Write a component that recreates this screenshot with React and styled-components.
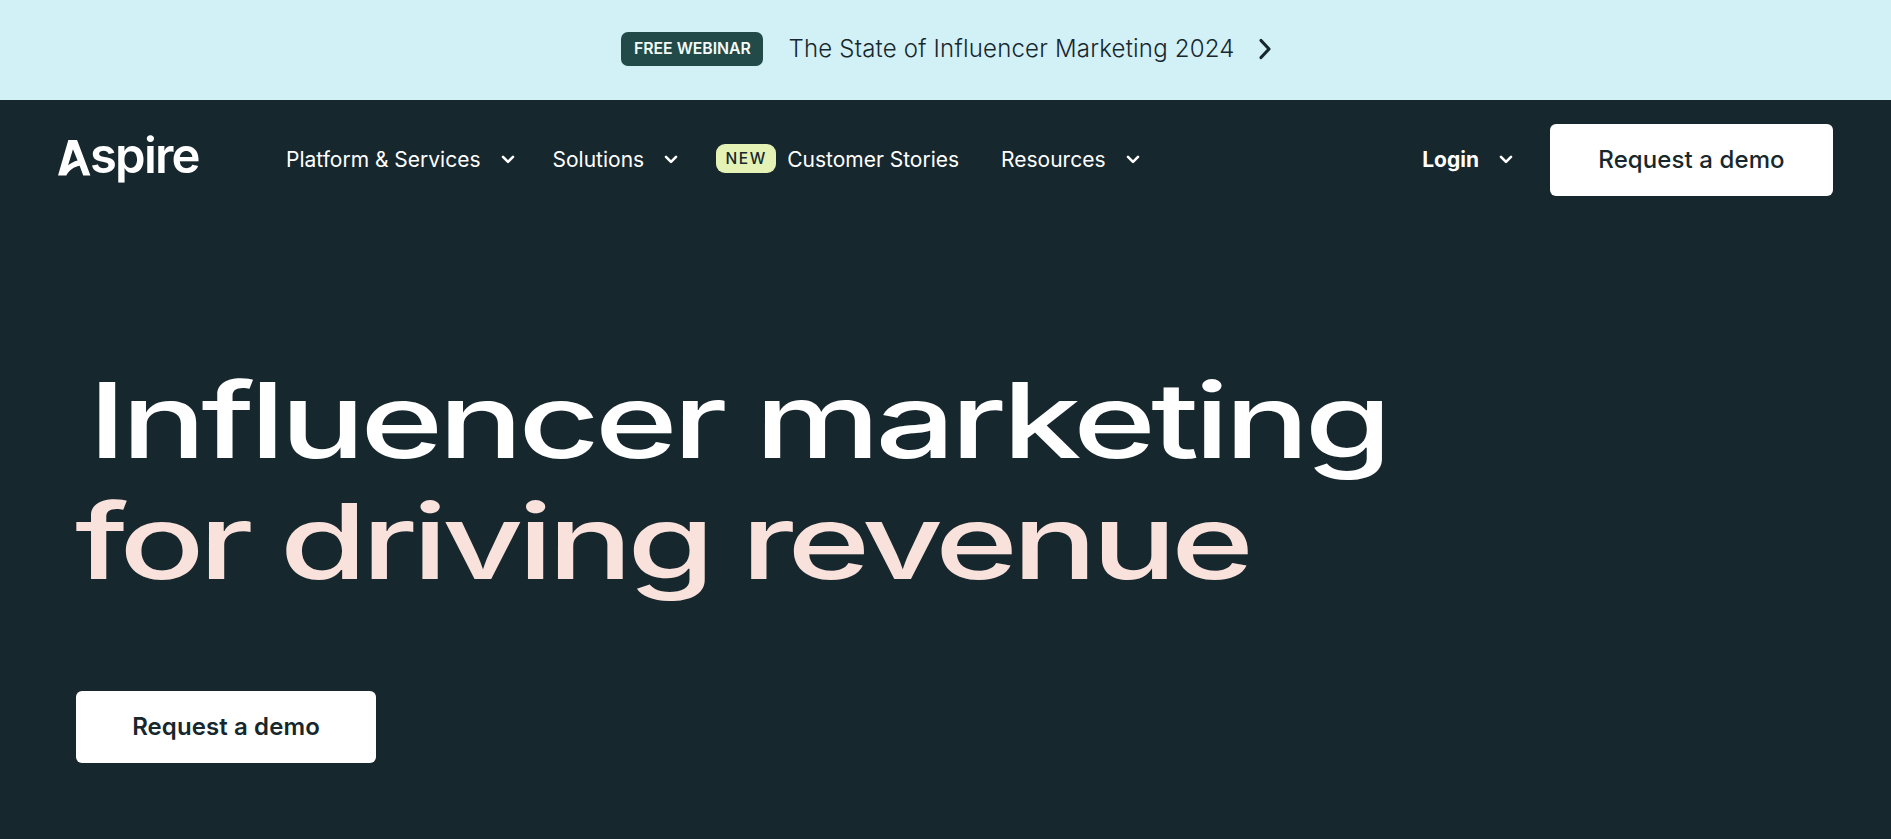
import React from 'react';
import styled, { createGlobalStyle } from 'styled-components';

const GlobalStyle = createGlobalStyle`
  html, body {
    margin: 0;
    padding: 0;
    background-color: #17272e;
  }
  body {
    font-family: Inter, "Liberation Sans", sans-serif;
    overflow: hidden;
  }
`;

const Page = styled.div`
  width: 100%;
  height: 839px;
  background-color: #17272e;
  overflow: hidden;
`;

const Banner = styled.a`
  height: 100px;
  padding-bottom: 3px;
  padding-left: 2px;
  box-sizing: border-box;
  display: flex;
  align-items: center;
  justify-content: center;
  background-color: #d2f1f6;
  color: #17272e;
`;

const BannerBadge = styled.span`
  height: 34px;
  width: 142px;
  display: flex;
  align-items: center;
  justify-content: center;
  border-radius: 7px;
  background-color: #214a48;
  color: #f4fbf9;
  font-size: 15.8px;
  font-weight: 600;
  white-space: nowrap;
`;

const BannerText = styled.span`
  margin-left: 25px;
  font-size: 24px;
  font-weight: 300;
  letter-spacing: 0.2px;
  white-space: nowrap;
`;

const BannerArrow = styled.svg`
  margin-left: 23px;
  width: 14px;
  height: 22px;
`;

const Navbar = styled.nav`
  height: 124px;
  padding: 24px 58px 0 58px;
  box-sizing: border-box;
  display: flex;
  align-items: flex-start;
`;

const Logo = styled.div`
  width: 228px;
  height: 72px;
  display: flex;
  align-items: center;
  color: #fff;
`;

const LogoMark = styled.svg`
  width: 33px;
  height: 36px;
  margin-top: -4px;
  flex-shrink: 0;
`;

const LogoText = styled.span`
  margin-left: -1px;
  font-size: 49px;
  font-weight: 600;
  letter-spacing: -1.8px;
  line-height: 72px;
  margin-top: -8px;
`;

const NavLinks = styled.ul`
  list-style: none;
  margin: 0;
  padding: 0;
  height: 70px;
  display: flex;
  align-items: center;
`;

const NavItem = styled.li`
  display: flex;
  align-items: center;
  margin-right: ${props => props.$gap}px;
  color: #fff;
  font-size: 21px;
  font-weight: 400;
  white-space: nowrap;
`;

const Chevron = styled.svg`
  margin-left: 20px;
  margin-top: 1px;
  width: 14px;
  height: 9px;
`;

const NewBadge = styled.span`
  width: 60px;
  height: 29px;
  margin-right: 11px;
  margin-top: -1px;
  display: flex;
  align-items: center;
  justify-content: center;
  border-radius: 9px;
  background-color: #e4f2b5;
  color: #17272e;
  font-size: 15.5px;
  font-weight: 500;
  letter-spacing: 1.6px;
`;

const NavRight = styled.div`
  margin-left: auto;
  height: 72px;
  display: flex;
  align-items: center;
`;

const LoginLink = styled.a`
  display: flex;
  align-items: center;
  margin-right: 37px;
  margin-top: -2px;
  color: #fff;
  font-size: 21px;
  font-weight: 700;
`;

const DemoButton = styled.a`
  width: ${props => props.$width}px;
  height: 72px;
  padding-bottom: 1px;
  box-sizing: border-box;
  display: flex;
  align-items: center;
  justify-content: center;
  border-radius: 6px;
  background-color: #fff;
  color: #17272e;
  font-size: 24px;
  font-weight: ${props => props.$weight};
  letter-spacing: 0.1px;
  white-space: nowrap;
`;

const Hero = styled.section`
  padding: 136px 0 0 75px;
`;

const HeroTitle = styled.h1`
  margin: 0;
  font-family: Inter, "Open Sans", sans-serif;
  font-size: 104px;
  font-weight: 500;
  line-height: 121px;
  font-variant-ligatures: none;
`;

const HeroLine = styled.span`
  display: block;
  white-space: nowrap;
  padding-left: ${props => props.$indent}px;
  letter-spacing: ${props => props.$spacing}px;
  color: ${props => props.$color};
  transform: scaleX(1.36);
  transform-origin: left center;
`;

const HeroAction = styled.div`
  margin-top: 89px;
  margin-left: 1px;
`;

function ChevronDown() {
  return (
    <Chevron viewBox="0 0 14 9" fill="none">
      <path d="M2 1.8 L7 6.8 L12 1.8" stroke="#fff" strokeWidth="2.6" strokeLinecap="round" strokeLinejoin="round" />
    </Chevron>
  );
}

export default function App() {
  return (
    <Page>
      <GlobalStyle />
      <Banner>
        <BannerBadge>FREE WEBINAR</BannerBadge>
        <BannerText>The State of Influencer Marketing 2024</BannerText>
        <BannerArrow viewBox="0 0 14 22" fill="none">
          <path d="M3 2.5 L11 11 L3 19.5" stroke="#17272e" strokeWidth="3.2" strokeLinecap="round" strokeLinejoin="round" />
        </BannerArrow>
      </Banner>

      <Navbar>
        <Logo>
          <LogoMark viewBox="0 0 32 35" fill="#fff">
            <path d="M10 0 H18.5 L31.5 34.5 H24.5 L21 25 C15.5 26 11 29 8 34.5 H0 Z M14.5 9 L9.8 24.5 C12.5 22.5 15.5 21 19 20 Z" fillRule="evenodd" />
          </LogoMark>
          <LogoText>spire</LogoText>
        </Logo>

        <NavLinks>
          <NavItem $gap={38}>Platform &amp; Services<ChevronDown /></NavItem>
          <NavItem $gap={38}>Solutions<ChevronDown /></NavItem>
          <NavItem $gap={42}>
            <NewBadge>NEW</NewBadge>
            <span>Customer Stories</span>
          </NavItem>
          <NavItem $gap={0}>Resources<ChevronDown /></NavItem>
        </NavLinks>

        <NavRight>
          <LoginLink>Login<ChevronDown /></LoginLink>
          <DemoButton $width={283} $weight={500}>Request a demo</DemoButton>
        </NavRight>
      </Navbar>

      <Hero>
        <HeroTitle>
          <HeroLine $color="#ffffff" $indent={9.5} $spacing={-3.77}>Influencer marketing</HeroLine>
          <HeroLine $color="#fae2dc" $indent={0} $spacing={-4.2}>for driving revenue</HeroLine>
        </HeroTitle>
        <HeroAction>
          <DemoButton $width={300} $weight={600}>Request a demo</DemoButton>
        </HeroAction>
      </Hero>
    </Page>
  );
}
